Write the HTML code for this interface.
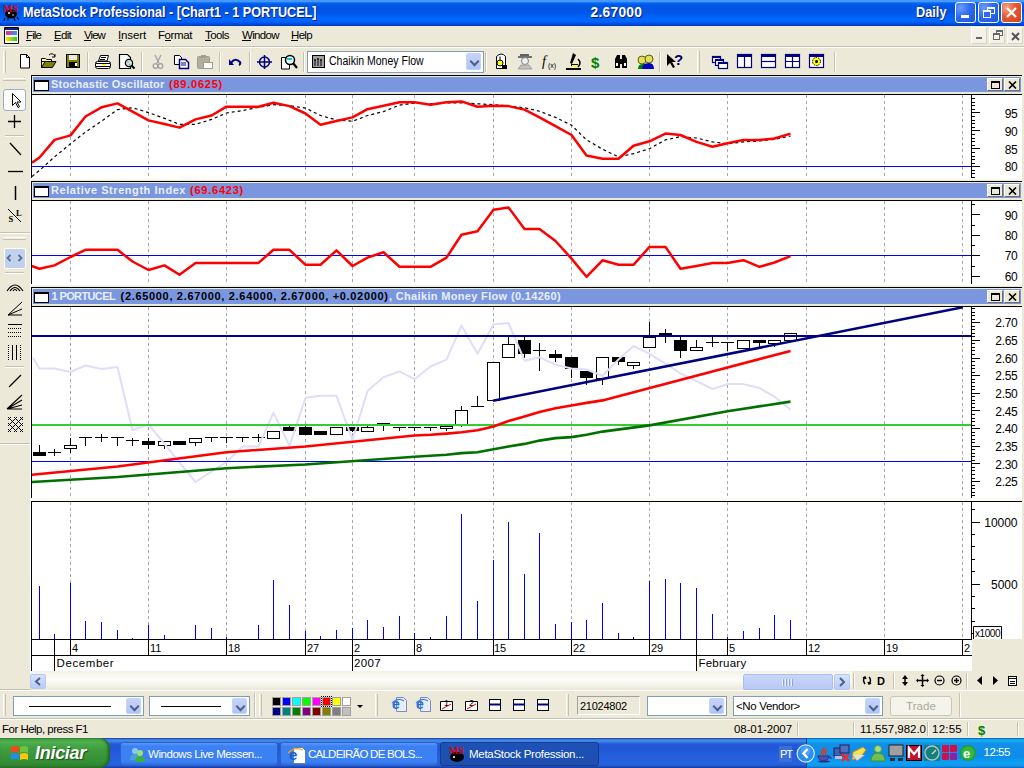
<!DOCTYPE html>
<html><head><meta charset="utf-8">
<style>
*{margin:0;padding:0;box-sizing:border-box}
html,body{width:1024px;height:768px;overflow:hidden;background:#ECE9D8;font-family:"Liberation Sans",sans-serif;font-size:11px;color:#000;position:relative}
.a{position:absolute}
.t{position:absolute;white-space:pre;line-height:1}
#title{left:0;top:0;width:1024px;height:26px;background:linear-gradient(180deg,#4898ff 0px,#4898ff 1.5px,#0a7cff 2.5px,#005ae8 4px,#0053e0 8px,#0058ea 13px,#0066ff 19px,#0064fc 22px,#0048d8 24px,#003cc8 26px)}
.tbtn{position:absolute;top:2px;width:21px;height:21px;border:1px solid #fff;border-radius:3px;background:radial-gradient(circle at 25% 25%,#6d9cff 0,#2e6bf0 45%,#1f54d8 100%)}
.mdib{position:absolute;top:27px;width:16px;height:17px;background:#f3f1e8;border:1px solid #fff;border-right-color:#d8d4c4;border-bottom-color:#d8d4c4}
.hdr{position:absolute;left:31px;width:993px;height:20px;background:#000}
.hdr .in{position:absolute;left:1px;top:1px;width:990px;height:18px;background:#ECE9D8}
.hdr .bl{position:absolute;left:2px;top:2px;width:988px;height:15px;background:#7A96DF}
.hdr .ic{position:absolute;left:1px;top:3px;width:15px;height:11px;background:#fff;border:1px solid #000;border-top-width:2px}
.hb{position:absolute;width:16px;height:13px;background:#ECE9D8;border:1px solid;border-color:#fff #716f64 #716f64 #fff}
.panel{position:absolute;left:31px;background:#fff;border-left:1px solid #000}
.sep{position:absolute;width:2px;border-left:1px solid #c5c2b2;border-right:1px solid #fff}
.grip{position:absolute;width:3px;border-left:1px solid #fff;border-right:1px solid #c5c2b2;background:#ECE9D8}
.combo{position:absolute;background:#fff;border:1px solid #7f9db9}
.dd{position:absolute;width:15px;height:17px;border-radius:2px;background:linear-gradient(180deg,#c6d3f7,#b0c4f5);border:1px solid #c3d3fd}
.dd:after{content:"";position:absolute;left:4px;top:4px;width:5px;height:5px;border-right:2px solid #4d6185;border-bottom:2px solid #4d6185;transform:rotate(45deg)}
#task{left:0;top:738px;width:1024px;height:30px;background:linear-gradient(180deg,#1f2f86 0,#3165c4 3%,#3682e5 6%,#4490e6 10%,#3883e5 12%,#2b71e0 15%,#2663da 18%,#235bd6 20%,#2258d5 23%,#2157d6 38%,#245ddb 54%,#2562df 86%,#245fdc 89%,#2158d4 92%,#1d4ec0 95%,#1941a5 98%)}
.tb{position:absolute;top:742px;height:24px;border-radius:3px;background:linear-gradient(180deg,#5a98fa 0,#3c81f3 15%,#3c81f3 85%,#2d6ae0 100%);border:1px solid #2c5fd0}
.tba{background:linear-gradient(180deg,#1e52b7 0,#1e4fb0 100%);border-color:#173b8a}
</style></head><body>
<!-- TITLE BAR -->
<div id="title" class="a"></div>
<div class="tbtn" style="left:955px"><div class="a" style="left:5px;top:12px;width:8px;height:3px;background:#fff"></div></div>
<div class="tbtn" style="left:978px"><div class="a" style="left:8px;top:4px;width:8px;height:7px;border:1px solid #fff;border-top-width:2px"></div><div class="a" style="left:4px;top:7px;width:8px;height:8px;border:1px solid #fff;border-top-width:2px;background:#3068ec"></div></div>
<div class="tbtn" style="left:1001px;background:radial-gradient(circle at 25% 25%,#f5a587 0,#e4592f 45%,#cc4219 100%)"><svg class="a" style="left:3px;top:3px" width="13" height="13"><path d="M2 2L11 11M11 2L2 11" stroke="#fff" stroke-width="2.2"/></svg></div>

<!-- MENU BAR -->
<div class="a" style="left:4px;top:27px;width:15px;height:17px;background:#000;border-radius:1px"></div>
<div class="a" style="left:5px;top:28px;width:13px;height:15px;background:#fff"></div><div class="a" style="left:5px;top:28px;width:13px;height:2px;background:#10208a"></div>
<div class="a" style="left:6px;top:31px;width:11px;height:4px;background:linear-gradient(90deg,#ff2080,#20a0ff)"></div>
<div class="a" style="left:6px;top:37px;width:11px;height:4px;background:linear-gradient(90deg,#ffe000,#20d020)"></div>
<div class="mdib" style="left:971px"><div class="a" style="left:4px;top:9px;width:6px;height:2px;background:#666"></div></div>
<div class="mdib" style="left:989px"><div class="a" style="left:6px;top:2px;width:7px;height:6px;border:1px solid #666;border-top-width:2px"></div><div class="a" style="left:3px;top:5px;width:7px;height:7px;border:1px solid #666;border-top-width:2px;background:#f3f1e8"></div></div>
<div class="mdib" style="left:1007px"><svg class="a" style="left:2px;top:3px" width="11" height="11"><path d="M2 2L9 9M9 2L2 9" stroke="#555" stroke-width="2"/></svg></div>
<div class="a" style="left:0;top:46px;width:1024px;height:1px;background:#c5c2b2"></div>
<div class="a" style="left:0;top:47px;width:1024px;height:1px;background:#fff"></div>

<!-- TOOLBAR -->
<div class="grip" style="left:3px;top:51px;height:22px"></div>
<div class="sep" style="left:87px;top:52px;height:20px"></div>
<div class="sep" style="left:141px;top:52px;height:20px"></div>
<div class="sep" style="left:219px;top:52px;height:20px"></div>
<div class="sep" style="left:249px;top:52px;height:20px"></div>
<div class="sep" style="left:303px;top:52px;height:20px"></div>
<div class="sep" style="left:485px;top:52px;height:20px"></div>
<div class="sep" style="left:659px;top:52px;height:20px"></div>
<div class="sep" style="left:834px;top:52px;height:20px"></div>
<div class="grip" style="left:697px;top:51px;height:22px"></div>
<div class="combo" style="left:307px;top:51px;width:177px;height:22px"></div>
<div class="dd" style="left:466px;top:53px"></div>
<svg class="a" style="left:0;top:47px" width="840" height="28">
<!-- new -->
<path d="M20.5 7.5h6l3 3v10.5h-9z" fill="#fff" stroke="#000"/><path d="M26.5 7.5v3h3" fill="none" stroke="#000"/>
<!-- open -->
<path d="M41.5 11.5h4l1 1h5v2h-10z" fill="#ffff80" stroke="#000"/><path d="M41.5 13v7.5h11l3.5-6h-11l-3.5 6" fill="#808000" stroke="#000"/><path d="M49 8q3-3 6 1" fill="none" stroke="#000"/><path d="M55 7v3h-3" fill="none" stroke="#000"/>
<!-- save -->
<rect x="66.5" y="7.5" width="13" height="13" fill="#808000" stroke="#000"/><rect x="69" y="8" width="8" height="5" fill="#ecead8"/><rect x="69" y="15" width="8" height="5" fill="#000"/><rect x="75" y="16" width="2" height="3" fill="#fff"/>
<!-- print -->
<path d="M100.5 8.5h8l-1.5 5.5h-8.5z" fill="#fff" stroke="#000"/><path d="M101 10.5h5M100 12.5h5" stroke="#000"/><rect x="95.5" y="14.5" width="15" height="7" rx="2" fill="#fff" stroke="#000"/><path d="M96 16.5h14M96 19.5h14" stroke="#000"/><rect x="97" y="17" width="12" height="2" fill="#fff"/><rect x="102" y="17" width="3" height="2" fill="#ffff00"/>
<!-- preview -->
<path d="M119.5 7.5h8l3 3v11h-11z" fill="#fff" stroke="#000" stroke-width="1.2"/><circle cx="129" cy="16" r="3.6" fill="#e8e0d0" stroke="#000" stroke-width="1.3"/><path d="M127.5 14.5l1 1M129 17l1 1" stroke="#00e0ff" stroke-width="1.5"/><path d="M131.5 18.5l3 3" stroke="#000" stroke-width="2"/>
<!-- cut gray -->
<path d="M155 8l4 8M161 8l-4 8" stroke="#a0a0a0" stroke-width="1.3" fill="none"/><circle cx="155.5" cy="19" r="2.3" fill="none" stroke="#a0a0a0" stroke-width="1.3"/><circle cx="160.5" cy="19" r="2.3" fill="none" stroke="#a0a0a0" stroke-width="1.3"/>
<!-- copy -->
<path d="M174.5 8.5h5l2 2v7h-7z" fill="#fff" stroke="#000"/><path d="M179.5 12.5h6l3 3v6h-9z" fill="#fff" stroke="#000080" stroke-width="1.5"/><path d="M181 16h5M181 18h5" stroke="#000080"/>
<!-- paste gray -->
<rect x="197.5" y="9.5" width="12" height="12" rx="1" fill="#b0ae9c" stroke="#a09e8c"/><rect x="201" y="8" width="5" height="3" fill="#a09e8c"/><rect x="203.5" y="15.5" width="9" height="6" fill="#fff" stroke="#a09e8c"/>
<!-- undo -->
<path d="M231 16q4-6 9 -1q1 2 -1 3" fill="none" stroke="#000080" stroke-width="2"/><path d="M229 12v6h5z" fill="#000080"/>
<!-- crosshair -->
<circle cx="264.5" cy="15" r="5" fill="none" stroke="#000080" stroke-width="1.5"/><path d="M264.5 8v14M257 15h15" stroke="#000080" stroke-width="1.5"/>
<!-- zoom -->
<path d="M281.5 10.5h6l2 2v9.5h-8z" fill="#fff" stroke="#000"/><circle cx="290" cy="13" r="4.5" fill="#e0ffff" stroke="#000" stroke-width="1.5"/><path d="M293 16l4 5" stroke="#000" stroke-width="2.2"/><rect x="287" y="11" width="5" height="2" fill="#20c0c0"/>
<!-- combo icon -->
<rect x="312.5" y="8.5" width="12" height="12" fill="#a0a0a0" stroke="#000"/><path d="M315 19v-7M318 19v-8M321 19v-7M314 13h2M317 12h2M320 13h2" stroke="#000"/>
<!-- lock -->
<path d="M496.5 9.5q5-5 9 0v12h-9z" fill="#fff" stroke="#000"/><circle cx="500" cy="16" r="3" fill="#ffff00" stroke="#000"/><path d="M500 9.5v4" stroke="#000"/><rect x="502" y="18" width="5" height="4" fill="#000"/>
<!-- chaplin gray -->
<rect x="520" y="7" width="9" height="3" fill="#606060"/><rect x="518" y="9" width="14" height="2" fill="#707070"/><circle cx="525" cy="14" r="3.5" fill="#f0f0f0" stroke="#808080"/><path d="M518 22l3-4h8l3 4z" fill="#c0c0c0" stroke="#a0a0a0"/>
<!-- f(x) -->
<text x="542" y="19" font-family="Liberation Serif" font-style="italic" font-size="14" fill="#000">f</text><text x="548" y="21" font-family="Liberation Sans" font-size="7" fill="#000">(x)</text>
<!-- microscope -->
<path d="M573 6l3 2-4 9-2-1z" fill="#000"/><path d="M571 18h7M566 22h15" stroke="#000" stroke-width="2"/><rect x="572" y="18" width="6" height="2" fill="#ffff00"/><path d="M578 12q4 4 0 8" fill="none" stroke="#000" stroke-width="1.5"/>
<!-- $ -->
<text x="591" y="21" font-family="Liberation Sans" font-weight="bold" font-size="15" fill="#008000">$</text>
<!-- binoculars -->
<path d="M615 12l2-4h3v4l2 0v-4h3l2 4v9h-5v-4h-2v4h-5z" fill="#000"/><rect x="616" y="16" width="2" height="3" fill="#fff"/><rect x="624" y="16" width="2" height="3" fill="#fff"/>
<!-- people -->
<circle cx="642" cy="13" r="4" fill="#e0e060" stroke="#606000"/><circle cx="649" cy="12" r="4" fill="#e0e060" stroke="#606000"/><path d="M638 22q0-5 5-5h2v5z" fill="#008000"/><path d="M642 22q0-6 7-6q5 0 5 6z" fill="#0000c0"/>
<!-- help arrow -->
<path d="M667 7v12l3-3 3 5 2-1-3-5h4z" fill="#000"/><text x="674" y="18" font-family="Liberation Sans" font-weight="bold" font-size="15" fill="#000080">?</text>
<!-- window icons -->
<g stroke="#000080" fill="#fff" stroke-width="1.2">
<rect x="712.5" y="9.5" width="8" height="6"/><rect x="715.5" y="12.5" width="8" height="6"/><rect x="718.5" y="15.5" width="9" height="6"/>
<rect x="737.5" y="7.5" width="14" height="13"/><path d="M744.5 9v11"/>
<rect x="761.5" y="7.5" width="14" height="13"/><path d="M762 14.5h13"/>
<rect x="785.5" y="7.5" width="14" height="13"/><path d="M786 14.5h13M792.5 9v11"/>
<rect x="809.5" y="7.5" width="14" height="13"/>
</g>
<g fill="#000080"><rect x="712" y="9" width="9" height="2"/><rect x="715" y="12" width="9" height="2"/><rect x="718" y="15" width="10" height="2"/><rect x="737" y="7" width="15" height="3"/><rect x="761" y="7" width="15" height="3"/><rect x="785" y="7" width="15" height="3"/><rect x="809" y="7" width="15" height="3"/></g>
<circle cx="816.5" cy="14.5" r="4" fill="#ffff00" stroke="#000" stroke-dasharray="1.5 1"/><circle cx="816.5" cy="14.5" r="1.5" fill="#000"/>
</svg>

<!-- LEFT STRIP -->
<div class="a" style="left:0;top:75px;width:30px;height:615px;background:#ECE9D8"></div>
<div class="a" style="left:30px;top:75px;width:1px;height:596px;background:#fff"></div>
<div class="a" style="left:3px;top:78px;width:23px;height:3px;border-top:1px solid #fff;border-bottom:1px solid #c5c2b2;background:#ECE9D8"></div>
<div class="a" style="left:3px;top:237px;width:23px;height:3px;border-top:1px solid #fff;border-bottom:1px solid #c5c2b2;background:#ECE9D8"></div>
<div class="a" style="left:5px;top:135px;width:19px;height:2px;border-top:1px solid #c5c2b2;border-bottom:1px solid #fff"></div>
<div class="a" style="left:5px;top:272px;width:19px;height:2px;border-top:1px solid #c5c2b2;border-bottom:1px solid #fff"></div>
<div class="a" style="left:5px;top:366px;width:19px;height:2px;border-top:1px solid #c5c2b2;border-bottom:1px solid #fff"></div>
<div class="a" style="left:0;top:232px;width:30px;height:2px;border-top:1px solid #c5c2b2;border-bottom:1px solid #fff"></div>
<div class="a" style="left:0;top:443px;width:30px;height:2px;border-top:1px solid #c5c2b2;border-bottom:1px solid #fff"></div>
<div class="a" style="left:3px;top:89px;width:23px;height:22px;border:1px solid #9cb0ce;border-radius:3px;background:#fcfcf9"></div>
<div class="a" style="left:4px;top:248px;width:22px;height:21px;border:1px solid #fff;border-radius:2px;background:#c1d2ee"></div>
<svg class="a" style="left:0;top:75px" width="30" height="370">
<path d="M12.5 18.5v12l3-3 2.5 5 1.5-.8-2.5-4.7h4z" fill="#fff" stroke="#000"/>
<path d="M8 46.5h13M14.5 40v13" stroke="#000" stroke-width="1.3"/>
<path d="M10 68l11 12" stroke="#000" stroke-width="1.3"/>
<path d="M8 96.5h15" stroke="#000" stroke-width="1.3"/>
<path d="M15.5 111v14" stroke="#000" stroke-width="1.5"/>
<path d="M8 134l13 13" stroke="#000" stroke-width="1"/><text x="8.5" y="146.5" font-size="8.5" font-weight="bold" font-family="Liberation Serif">S</text><text x="16" y="140.5" font-size="8.5" font-weight="bold" font-family="Liberation Serif">L</text>
<path d="M10.5 180l-3 3 3 3M18.5 180l3 3-3 3" fill="none" stroke="#5a6e96" stroke-width="1.8"/>
<path d="M7 216q8-12 16 0M10 216q5-7 10 0M13 216q2-3 4 0" fill="none" stroke="#000" stroke-width="1.2"/>
<path d="M8 240l14-13M8 240l14-6M8 240l14 0" fill="none" stroke="#000" stroke-width="1"/>
<path d="M8 249.5h14M8 253.5h14M8 257.5h14M8 261.5h14" stroke="#000" stroke-dasharray="1 1"/><path d="M8 249.5h14" stroke="#000"/>
<path d="M8.5 270v15M12.5 270v15M16.5 270v15M20.5 270v15" stroke="#000" stroke-dasharray="1 1"/><path d="M12.5 270v15M16.5 270v15" stroke="#000" stroke-width="1"/>
<path d="M9 312l12-12" stroke="#000" stroke-width="1.2"/>
<path d="M7 334l15-14M7 334l15-9M7 334l15-4M7 334h15" stroke="#000" stroke-width="1.1"/><path d="M7 334l4-4v4z" fill="#000"/>
<path d="M8 342h1v1h-1zM8 344h1v1h-1zM8 348h1v1h-1zM8 350h1v1h-1zM8 354h1v1h-1zM8 356h1v1h-1zM9 343h1v1h-1zM9 349h1v1h-1zM9 355h1v1h-1zM10 342h1v1h-1zM10 344h1v1h-1zM10 348h1v1h-1zM10 350h1v1h-1zM10 354h1v1h-1zM10 356h1v1h-1zM11 345h1v1h-1zM11 347h1v1h-1zM11 351h1v1h-1zM11 353h1v1h-1zM12 346h1v1h-1zM12 352h1v1h-1zM13 345h1v1h-1zM13 347h1v1h-1zM13 351h1v1h-1zM13 353h1v1h-1zM14 342h1v1h-1zM14 344h1v1h-1zM14 348h1v1h-1zM14 350h1v1h-1zM14 354h1v1h-1zM14 356h1v1h-1zM15 343h1v1h-1zM15 349h1v1h-1zM15 355h1v1h-1zM16 342h1v1h-1zM16 344h1v1h-1zM16 348h1v1h-1zM16 350h1v1h-1zM16 354h1v1h-1zM16 356h1v1h-1zM17 345h1v1h-1zM17 347h1v1h-1zM17 351h1v1h-1zM17 353h1v1h-1zM18 346h1v1h-1zM18 352h1v1h-1zM19 345h1v1h-1zM19 347h1v1h-1zM19 351h1v1h-1zM19 353h1v1h-1zM20 342h1v1h-1zM20 344h1v1h-1zM20 348h1v1h-1zM20 350h1v1h-1zM20 354h1v1h-1zM20 356h1v1h-1zM21 343h1v1h-1zM21 349h1v1h-1zM21 355h1v1h-1zM22 342h1v1h-1zM22 344h1v1h-1zM22 348h1v1h-1zM22 350h1v1h-1zM22 354h1v1h-1zM22 356h1v1h-1z" fill="#000"/>
</svg>

<!-- CHART PANELS -->
<div class="hdr" style="top:75px"><div class="in"></div><div class="bl"><div class="ic"></div><div class="hb" style="left:954px;top:1px"><div class="a" style="left:3px;top:2px;width:9px;height:8px;border:1px solid #000;border-top-width:2px"></div></div><div class="hb" style="left:971px;top:1px"><svg class="a" style="left:3px;top:2px" width="9" height="8"><path d="M1 0.5L8 7.5M8 0.5L1 7.5" stroke="#000" stroke-width="1.6"/></svg></div></div></div>
<div class="panel" style="top:95px;height:83px;width:991px"></div>
<div class="a" style="left:31px;top:178px;width:993px;height:2px;background:#fbfaf5"></div>
<div class="hdr" style="top:181px"><div class="in"></div><div class="bl"><div class="ic"></div><div class="hb" style="left:954px;top:1px"><div class="a" style="left:3px;top:2px;width:9px;height:8px;border:1px solid #000;border-top-width:2px"></div></div><div class="hb" style="left:971px;top:1px"><svg class="a" style="left:3px;top:2px" width="9" height="8"><path d="M1 0.5L8 7.5M8 0.5L1 7.5" stroke="#000" stroke-width="1.6"/></svg></div></div></div>
<div class="panel" style="top:201px;height:83px;width:991px"></div>
<div class="a" style="left:31px;top:284px;width:993px;height:2px;background:#fbfaf5"></div>
<div class="hdr" style="top:287px"><div class="in"></div><div class="bl"><div class="ic"></div><div class="hb" style="left:954px;top:1px"><div class="a" style="left:3px;top:2px;width:9px;height:8px;border:1px solid #000;border-top-width:2px"></div></div><div class="hb" style="left:971px;top:1px"><svg class="a" style="left:3px;top:2px" width="9" height="8"><path d="M1 0.5L8 7.5M8 0.5L1 7.5" stroke="#000" stroke-width="1.6"/></svg></div></div></div>
<div class="panel" style="top:307px;height:191px;width:991px"></div>
<div class="a" style="left:31px;top:498px;width:993px;height:3px;background:#fbfaf5"></div>
<div class="a" style="left:31px;top:501px;width:993px;height:1px;background:#000"></div>
<div class="panel" style="top:502px;height:137px;width:991px"></div>
<div class="panel" style="top:639px;height:32px;width:941px"></div>
<div class="a" style="left:1022px;top:75px;width:2px;height:596px;background:#ECE9D8"></div>
<svg class="a" style="left:0;top:0" width="1024" height="768">
<defs><clipPath id="cs"><rect x="32" y="95" width="940" height="83"/></clipPath><clipPath id="cr"><rect x="32" y="201" width="940" height="83"/></clipPath><clipPath id="cp"><rect x="32" y="307" width="940" height="191"/></clipPath></defs>
<line x1="70.5" y1="95" x2="70.5" y2="178" stroke="#a8a8a8" stroke-width="1" stroke-dasharray="3 3"/>
<line x1="148.5" y1="95" x2="148.5" y2="178" stroke="#a8a8a8" stroke-width="1" stroke-dasharray="3 3"/>
<line x1="226.5" y1="95" x2="226.5" y2="178" stroke="#a8a8a8" stroke-width="1" stroke-dasharray="3 3"/>
<line x1="305.5" y1="95" x2="305.5" y2="178" stroke="#a8a8a8" stroke-width="1" stroke-dasharray="3 3"/>
<line x1="352.5" y1="95" x2="352.5" y2="178" stroke="#a8a8a8" stroke-width="1" stroke-dasharray="3 3"/>
<line x1="414.5" y1="95" x2="414.5" y2="178" stroke="#a8a8a8" stroke-width="1" stroke-dasharray="3 3"/>
<line x1="493.5" y1="95" x2="493.5" y2="178" stroke="#a8a8a8" stroke-width="1" stroke-dasharray="3 3"/>
<line x1="571.5" y1="95" x2="571.5" y2="178" stroke="#a8a8a8" stroke-width="1" stroke-dasharray="3 3"/>
<line x1="649.5" y1="95" x2="649.5" y2="178" stroke="#a8a8a8" stroke-width="1" stroke-dasharray="3 3"/>
<line x1="727.5" y1="95" x2="727.5" y2="178" stroke="#a8a8a8" stroke-width="1" stroke-dasharray="3 3"/>
<line x1="806.5" y1="95" x2="806.5" y2="178" stroke="#a8a8a8" stroke-width="1" stroke-dasharray="3 3"/>
<line x1="884.5" y1="95" x2="884.5" y2="178" stroke="#a8a8a8" stroke-width="1" stroke-dasharray="3 3"/>
<line x1="962.5" y1="95" x2="962.5" y2="178" stroke="#a8a8a8" stroke-width="1" stroke-dasharray="3 3"/>
<line x1="70.5" y1="201" x2="70.5" y2="284" stroke="#a8a8a8" stroke-width="1" stroke-dasharray="3 3"/>
<line x1="148.5" y1="201" x2="148.5" y2="284" stroke="#a8a8a8" stroke-width="1" stroke-dasharray="3 3"/>
<line x1="226.5" y1="201" x2="226.5" y2="284" stroke="#a8a8a8" stroke-width="1" stroke-dasharray="3 3"/>
<line x1="305.5" y1="201" x2="305.5" y2="284" stroke="#a8a8a8" stroke-width="1" stroke-dasharray="3 3"/>
<line x1="352.5" y1="201" x2="352.5" y2="284" stroke="#a8a8a8" stroke-width="1" stroke-dasharray="3 3"/>
<line x1="414.5" y1="201" x2="414.5" y2="284" stroke="#a8a8a8" stroke-width="1" stroke-dasharray="3 3"/>
<line x1="493.5" y1="201" x2="493.5" y2="284" stroke="#a8a8a8" stroke-width="1" stroke-dasharray="3 3"/>
<line x1="571.5" y1="201" x2="571.5" y2="284" stroke="#a8a8a8" stroke-width="1" stroke-dasharray="3 3"/>
<line x1="649.5" y1="201" x2="649.5" y2="284" stroke="#a8a8a8" stroke-width="1" stroke-dasharray="3 3"/>
<line x1="727.5" y1="201" x2="727.5" y2="284" stroke="#a8a8a8" stroke-width="1" stroke-dasharray="3 3"/>
<line x1="806.5" y1="201" x2="806.5" y2="284" stroke="#a8a8a8" stroke-width="1" stroke-dasharray="3 3"/>
<line x1="884.5" y1="201" x2="884.5" y2="284" stroke="#a8a8a8" stroke-width="1" stroke-dasharray="3 3"/>
<line x1="962.5" y1="201" x2="962.5" y2="284" stroke="#a8a8a8" stroke-width="1" stroke-dasharray="3 3"/>
<line x1="70.5" y1="307" x2="70.5" y2="498" stroke="#a8a8a8" stroke-width="1" stroke-dasharray="3 3"/>
<line x1="148.5" y1="307" x2="148.5" y2="498" stroke="#a8a8a8" stroke-width="1" stroke-dasharray="3 3"/>
<line x1="226.5" y1="307" x2="226.5" y2="498" stroke="#a8a8a8" stroke-width="1" stroke-dasharray="3 3"/>
<line x1="305.5" y1="307" x2="305.5" y2="498" stroke="#a8a8a8" stroke-width="1" stroke-dasharray="3 3"/>
<line x1="352.5" y1="307" x2="352.5" y2="498" stroke="#a8a8a8" stroke-width="1" stroke-dasharray="3 3"/>
<line x1="414.5" y1="307" x2="414.5" y2="498" stroke="#a8a8a8" stroke-width="1" stroke-dasharray="3 3"/>
<line x1="493.5" y1="307" x2="493.5" y2="498" stroke="#a8a8a8" stroke-width="1" stroke-dasharray="3 3"/>
<line x1="571.5" y1="307" x2="571.5" y2="498" stroke="#a8a8a8" stroke-width="1" stroke-dasharray="3 3"/>
<line x1="649.5" y1="307" x2="649.5" y2="498" stroke="#a8a8a8" stroke-width="1" stroke-dasharray="3 3"/>
<line x1="727.5" y1="307" x2="727.5" y2="498" stroke="#a8a8a8" stroke-width="1" stroke-dasharray="3 3"/>
<line x1="806.5" y1="307" x2="806.5" y2="498" stroke="#a8a8a8" stroke-width="1" stroke-dasharray="3 3"/>
<line x1="884.5" y1="307" x2="884.5" y2="498" stroke="#a8a8a8" stroke-width="1" stroke-dasharray="3 3"/>
<line x1="962.5" y1="307" x2="962.5" y2="498" stroke="#a8a8a8" stroke-width="1" stroke-dasharray="3 3"/>
<line x1="70.5" y1="502" x2="70.5" y2="639" stroke="#a8a8a8" stroke-width="1" stroke-dasharray="3 3"/>
<line x1="148.5" y1="502" x2="148.5" y2="639" stroke="#a8a8a8" stroke-width="1" stroke-dasharray="3 3"/>
<line x1="226.5" y1="502" x2="226.5" y2="639" stroke="#a8a8a8" stroke-width="1" stroke-dasharray="3 3"/>
<line x1="305.5" y1="502" x2="305.5" y2="639" stroke="#a8a8a8" stroke-width="1" stroke-dasharray="3 3"/>
<line x1="352.5" y1="502" x2="352.5" y2="639" stroke="#a8a8a8" stroke-width="1" stroke-dasharray="3 3"/>
<line x1="414.5" y1="502" x2="414.5" y2="639" stroke="#a8a8a8" stroke-width="1" stroke-dasharray="3 3"/>
<line x1="493.5" y1="502" x2="493.5" y2="639" stroke="#a8a8a8" stroke-width="1" stroke-dasharray="3 3"/>
<line x1="571.5" y1="502" x2="571.5" y2="639" stroke="#a8a8a8" stroke-width="1" stroke-dasharray="3 3"/>
<line x1="649.5" y1="502" x2="649.5" y2="639" stroke="#a8a8a8" stroke-width="1" stroke-dasharray="3 3"/>
<line x1="727.5" y1="502" x2="727.5" y2="639" stroke="#a8a8a8" stroke-width="1" stroke-dasharray="3 3"/>
<line x1="806.5" y1="502" x2="806.5" y2="639" stroke="#a8a8a8" stroke-width="1" stroke-dasharray="3 3"/>
<line x1="884.5" y1="502" x2="884.5" y2="639" stroke="#a8a8a8" stroke-width="1" stroke-dasharray="3 3"/>
<line x1="962.5" y1="502" x2="962.5" y2="639" stroke="#a8a8a8" stroke-width="1" stroke-dasharray="3 3"/>
<g clip-path="url(#cs)">
<line x1="32" y1="166.5" x2="972" y2="166.5" stroke="#0000ff" stroke-width="1"/>
<polyline points="32.0,176.5 39.5,170.4 54.5,156.9 70.5,143.8 85.5,132.0 101.5,121.3 117.5,109.6 132.5,107.7 148.5,112.6 164.5,118.4 179.5,124.3 195.5,124.3 211.5,119.4 226.5,113.0 242.5,110.6 258.5,107.3 273.5,104.7 289.5,105.7 305.5,108.1 320.5,115.5 336.5,120.0 352.5,121.3 367.5,115.5 383.5,111.6 399.5,105.1 414.5,103.1 430.5,103.8 446.5,102.8 461.5,102.8 477.5,103.8 493.5,104.7 508.5,106.1 524.5,107.7 539.5,111.2 555.5,117.4 571.5,125.2 586.5,139.9 602.5,149.2 618.5,156.9 633.5,153.6 649.5,148.7 665.5,139.9 680.5,136.6 696.5,138.0 712.5,141.9 727.5,143.8 743.5,141.9 759.5,140.9 774.5,139.3 790.5,136.0" fill="none" stroke="#000" stroke-width="1.2" stroke-dasharray="3 3"/>
<polyline points="32.0,162.8 39.5,157.5 54.5,139.9 70.5,135.4 85.5,116.5 101.5,107.3 117.5,103.4 132.5,111.6 148.5,120.4 164.5,124.0 179.5,127.6 195.5,119.4 211.5,115.5 226.5,106.7 242.5,106.7 258.5,106.7 273.5,102.8 289.5,106.1 305.5,113.5 320.5,124.7 336.5,121.0 352.5,117.4 367.5,109.2 383.5,105.7 399.5,102.2 414.5,102.2 430.5,104.7 446.5,102.2 461.5,101.4 477.5,106.7 493.5,105.7 508.5,106.1 524.5,109.6 539.5,117.4 555.5,126.2 571.5,135.0 586.5,155.5 602.5,158.8 618.5,158.8 633.5,145.8 649.5,141.3 665.5,133.6 680.5,135.0 696.5,141.9 712.5,146.7 727.5,143.2 743.5,139.9 759.5,139.9 774.5,138.5 790.5,133.6" fill="none" stroke="#ff0000" stroke-width="2.5" stroke-linejoin="round"/>
</g>
<g clip-path="url(#cr)">
<line x1="32" y1="255.5" x2="972" y2="255.5" stroke="#0000ff" stroke-width="1"/>
<polyline points="31.6,266.0 39.5,268.8 54.5,265.4 70.5,257.0 85.5,249.8 101.5,249.8 117.5,249.8 132.5,261.5 148.5,270.0 164.5,265.4 179.5,274.8 195.5,262.9 211.5,262.9 226.5,262.9 242.5,262.9 258.5,262.9 273.5,249.8 289.5,249.8 305.5,264.8 320.5,264.8 336.5,250.4 352.5,266.0 367.5,257.6 383.5,252.3 399.5,266.8 414.5,266.8 430.5,266.8 446.5,257.6 461.5,234.8 477.5,231.2 493.5,209.8 508.5,207.4 524.5,228.9 539.5,228.9 555.5,241.0 571.5,258.6 586.5,276.8 602.5,260.3 618.5,264.8 633.5,264.8 649.5,246.9 665.5,246.9 680.5,268.8 696.5,266.0 712.5,262.9 727.5,262.9 743.5,260.2 759.5,266.8 774.5,262.5 790.5,256.2" fill="none" stroke="#ff0000" stroke-width="2.5" stroke-linejoin="round"/>
</g>
<g clip-path="url(#cp)">
<line x1="39.5" y1="445" x2="39.5" y2="456" stroke="#000" stroke-width="1"/>
<rect x="33.5" y="452.5" width="12" height="3.0" fill="#000" stroke="#000" stroke-width="1"/>
<line x1="54.5" y1="449" x2="54.5" y2="456" stroke="#000" stroke-width="1"/>
<line x1="48.0" y1="452.5" x2="61.0" y2="452.5" stroke="#000" stroke-width="1"/>
<line x1="70.5" y1="438" x2="70.5" y2="453" stroke="#000" stroke-width="1"/>
<rect x="64.5" y="445.5" width="12" height="3.0" fill="#fff" stroke="#000" stroke-width="1"/>
<line x1="85.5" y1="437" x2="85.5" y2="446" stroke="#000" stroke-width="1"/>
<line x1="79.0" y1="437.5" x2="92.0" y2="437.5" stroke="#000" stroke-width="1"/>
<line x1="101.5" y1="434" x2="101.5" y2="442" stroke="#000" stroke-width="1"/>
<line x1="95.0" y1="437.5" x2="108.0" y2="437.5" stroke="#000" stroke-width="1"/>
<line x1="117.5" y1="437" x2="117.5" y2="446" stroke="#000" stroke-width="1"/>
<line x1="111.0" y1="437.5" x2="124.0" y2="437.5" stroke="#000" stroke-width="1"/>
<line x1="132.5" y1="438" x2="132.5" y2="446" stroke="#000" stroke-width="1"/>
<line x1="126.0" y1="440.5" x2="139.0" y2="440.5" stroke="#000" stroke-width="1"/>
<line x1="148.5" y1="438" x2="148.5" y2="449" stroke="#000" stroke-width="1"/>
<rect x="142.5" y="441.5" width="12" height="3.0" fill="#000" stroke="#000" stroke-width="1"/>
<line x1="164.5" y1="441" x2="164.5" y2="449" stroke="#000" stroke-width="1"/>
<rect x="158.5" y="441.5" width="12" height="4.0" fill="#fff" stroke="#000" stroke-width="1"/>
<line x1="179.5" y1="441" x2="179.5" y2="445" stroke="#000" stroke-width="1"/>
<rect x="173.5" y="441.5" width="12" height="3.0" fill="#000" stroke="#000" stroke-width="1"/>
<line x1="195.5" y1="438" x2="195.5" y2="446" stroke="#000" stroke-width="1"/>
<rect x="189.5" y="438.5" width="12" height="4.0" fill="#fff" stroke="#000" stroke-width="1"/>
<line x1="211.5" y1="437" x2="211.5" y2="442" stroke="#000" stroke-width="1"/>
<line x1="205.0" y1="437.5" x2="218.0" y2="437.5" stroke="#000" stroke-width="1"/>
<line x1="226.5" y1="437" x2="226.5" y2="443" stroke="#000" stroke-width="1"/>
<line x1="220.0" y1="437.5" x2="233.0" y2="437.5" stroke="#000" stroke-width="1"/>
<line x1="242.5" y1="437" x2="242.5" y2="442" stroke="#000" stroke-width="1"/>
<line x1="236.0" y1="437.5" x2="249.0" y2="437.5" stroke="#000" stroke-width="1"/>
<line x1="258.5" y1="434" x2="258.5" y2="442" stroke="#000" stroke-width="1"/>
<line x1="252.0" y1="437.5" x2="265.0" y2="437.5" stroke="#000" stroke-width="1"/>
<line x1="273.5" y1="431" x2="273.5" y2="439" stroke="#000" stroke-width="1"/>
<rect x="267.5" y="431.5" width="12" height="7.0" fill="#fff" stroke="#000" stroke-width="1"/>
<line x1="289.5" y1="426" x2="289.5" y2="431" stroke="#000" stroke-width="1"/>
<rect x="283.5" y="427.5" width="12" height="3.0" fill="#000" stroke="#000" stroke-width="1"/>
<line x1="305.5" y1="426" x2="305.5" y2="435" stroke="#000" stroke-width="1"/>
<rect x="299.5" y="427.5" width="12" height="7.0" fill="#000" stroke="#000" stroke-width="1"/>
<line x1="320.5" y1="431" x2="320.5" y2="435" stroke="#000" stroke-width="1"/>
<rect x="314.5" y="431.5" width="12" height="3.0" fill="#000" stroke="#000" stroke-width="1"/>
<line x1="336.5" y1="427" x2="336.5" y2="435" stroke="#000" stroke-width="1"/>
<rect x="330.5" y="427.5" width="12" height="7.0" fill="#fff" stroke="#000" stroke-width="1"/>
<line x1="352.5" y1="427" x2="352.5" y2="432" stroke="#000" stroke-width="1"/>
<rect x="346.5" y="427.5" width="12" height="3.0" fill="#000" stroke="#000" stroke-width="1"/>
<line x1="367.5" y1="425" x2="367.5" y2="432" stroke="#000" stroke-width="1"/>
<rect x="361.5" y="427.5" width="12" height="4.0" fill="#fff" stroke="#000" stroke-width="1"/>
<line x1="383.5" y1="423" x2="383.5" y2="431" stroke="#000" stroke-width="1"/>
<line x1="377.0" y1="423.5" x2="390.0" y2="423.5" stroke="#000" stroke-width="1"/>
<line x1="399.5" y1="427" x2="399.5" y2="431" stroke="#000" stroke-width="1"/>
<line x1="393.0" y1="427.5" x2="406.0" y2="427.5" stroke="#000" stroke-width="1"/>
<line x1="414.5" y1="427" x2="414.5" y2="431" stroke="#000" stroke-width="1"/>
<line x1="408.0" y1="427.5" x2="421.0" y2="427.5" stroke="#000" stroke-width="1"/>
<line x1="430.5" y1="427" x2="430.5" y2="431" stroke="#000" stroke-width="1"/>
<line x1="424.0" y1="427.5" x2="437.0" y2="427.5" stroke="#000" stroke-width="1"/>
<line x1="446.5" y1="426" x2="446.5" y2="431" stroke="#000" stroke-width="1"/>
<rect x="440.5" y="426.5" width="12" height="2.0" fill="#fff" stroke="#000" stroke-width="1"/>
<line x1="461.5" y1="406" x2="461.5" y2="427" stroke="#000" stroke-width="1"/>
<rect x="455.5" y="410.5" width="12" height="14.0" fill="#fff" stroke="#000" stroke-width="1"/>
<line x1="477.5" y1="396" x2="477.5" y2="407" stroke="#000" stroke-width="1"/>
<line x1="471.0" y1="406.5" x2="484.0" y2="406.5" stroke="#000" stroke-width="1"/>
<line x1="493.5" y1="362" x2="493.5" y2="401" stroke="#000" stroke-width="1"/>
<rect x="487.5" y="362.5" width="12" height="38.0" fill="#fff" stroke="#000" stroke-width="1"/>
<line x1="508.5" y1="336" x2="508.5" y2="358" stroke="#000" stroke-width="1"/>
<rect x="502.5" y="344.5" width="12" height="13.0" fill="#fff" stroke="#000" stroke-width="1"/>
<line x1="524.5" y1="336" x2="524.5" y2="358" stroke="#000" stroke-width="1"/>
<rect x="518.5" y="340.5" width="12" height="13.0" fill="#000" stroke="#000" stroke-width="1"/>
<line x1="539.5" y1="343" x2="539.5" y2="371" stroke="#000" stroke-width="1"/>
<line x1="533.0" y1="350.5" x2="546.0" y2="350.5" stroke="#000" stroke-width="1"/>
<line x1="555.5" y1="350" x2="555.5" y2="362" stroke="#000" stroke-width="1"/>
<rect x="549.5" y="354.5" width="12" height="3.0" fill="#000" stroke="#000" stroke-width="1"/>
<line x1="571.5" y1="357" x2="571.5" y2="378" stroke="#000" stroke-width="1"/>
<rect x="565.5" y="357.5" width="12" height="11.0" fill="#000" stroke="#000" stroke-width="1"/>
<line x1="586.5" y1="371" x2="586.5" y2="385" stroke="#000" stroke-width="1"/>
<rect x="580.5" y="371.5" width="12" height="6.0" fill="#000" stroke="#000" stroke-width="1"/>
<line x1="602.5" y1="357" x2="602.5" y2="385" stroke="#000" stroke-width="1"/>
<rect x="596.5" y="357.5" width="12" height="21.0" fill="#fff" stroke="#000" stroke-width="1"/>
<line x1="618.5" y1="357" x2="618.5" y2="365" stroke="#000" stroke-width="1"/>
<rect x="612.5" y="357.5" width="12" height="4.0" fill="#000" stroke="#000" stroke-width="1"/>
<line x1="633.5" y1="362" x2="633.5" y2="369" stroke="#000" stroke-width="1"/>
<rect x="627.5" y="362.5" width="12" height="3.0" fill="#fff" stroke="#000" stroke-width="1"/>
<line x1="649.5" y1="322" x2="649.5" y2="348" stroke="#000" stroke-width="1"/>
<rect x="643.5" y="337.5" width="12" height="10.0" fill="#fff" stroke="#000" stroke-width="1"/>
<line x1="665.5" y1="329" x2="665.5" y2="343" stroke="#000" stroke-width="1"/>
<rect x="659.5" y="333.5" width="12" height="2.0" fill="#000" stroke="#000" stroke-width="1"/>
<line x1="680.5" y1="336" x2="680.5" y2="358" stroke="#000" stroke-width="1"/>
<rect x="674.5" y="340.5" width="12" height="10.0" fill="#000" stroke="#000" stroke-width="1"/>
<line x1="696.5" y1="340" x2="696.5" y2="351" stroke="#000" stroke-width="1"/>
<rect x="690.5" y="347.5" width="12" height="3.0" fill="#fff" stroke="#000" stroke-width="1"/>
<line x1="712.5" y1="336" x2="712.5" y2="347" stroke="#000" stroke-width="1"/>
<line x1="706.0" y1="342.5" x2="719.0" y2="342.5" stroke="#000" stroke-width="1"/>
<line x1="727.5" y1="342" x2="727.5" y2="351" stroke="#000" stroke-width="1"/>
<line x1="721.0" y1="342.5" x2="734.0" y2="342.5" stroke="#000" stroke-width="1"/>
<line x1="743.5" y1="340" x2="743.5" y2="349" stroke="#000" stroke-width="1"/>
<rect x="737.5" y="340.5" width="12" height="8.0" fill="#fff" stroke="#000" stroke-width="1"/>
<line x1="759.5" y1="340" x2="759.5" y2="347" stroke="#000" stroke-width="1"/>
<rect x="753.5" y="340.5" width="12" height="2.0" fill="#000" stroke="#000" stroke-width="1"/>
<line x1="774.5" y1="340" x2="774.5" y2="347" stroke="#000" stroke-width="1"/>
<rect x="768.5" y="340.5" width="12" height="3.0" fill="#fff" stroke="#000" stroke-width="1"/>
<line x1="790.5" y1="333" x2="790.5" y2="341" stroke="#000" stroke-width="1"/>
<rect x="784.5" y="333.5" width="12" height="7.0" fill="#fff" stroke="#000" stroke-width="1"/>
<polyline points="32.9,357.7 39.5,368.5 54.5,368.5 70.5,372.0 85.5,365.5 101.5,369.0 117.5,367.1 132.5,430.3 148.5,424.4 164.5,444.0 179.5,462.5 195.5,482.0 211.5,471.5 226.5,462.0 242.5,446.5 258.5,446.5 273.5,412.7 289.5,445.9 305.5,397.8 320.5,395.8 336.5,395.8 352.5,440.0 367.5,391.0 383.5,377.3 399.5,371.4 414.5,379.2 430.5,366.5 446.5,359.7 461.5,325.5 477.5,353.8 493.5,324.5 508.5,323.0 524.5,360.7 539.5,357.3 555.5,364.6 571.5,368.5 586.5,369.5 602.5,375.7 618.5,359.5 633.5,346.0 649.5,353.8 665.5,363.6 680.5,373.4 696.5,381.2 712.5,389.0 727.5,384.1 743.5,384.1 759.5,388.0 774.5,396.8 790.5,409.8" fill="none" stroke="#dedef8" stroke-width="2" stroke-linejoin="round"/>
<line x1="32" y1="336" x2="972" y2="336" stroke="#000080" stroke-width="2"/>
<line x1="32" y1="425" x2="972" y2="425" stroke="#33cc33" stroke-width="2"/>
<line x1="32" y1="461.5" x2="972" y2="461.5" stroke="#0000ff" stroke-width="1"/>
<polyline points="32.0,482.0 117.5,477.0 226.5,468.2 305.5,464.5 414.5,456.8 430.5,455.7 446.5,454.7 461.5,453.1 477.5,452.3 493.5,449.2 508.5,446.5 524.5,443.9 539.5,440.6 555.5,438.1 571.5,437.1 586.5,434.8 602.5,431.6 649.5,425.4 727.5,411.3 790.5,401.6" fill="none" stroke="#007000" stroke-width="2.6"/>
<polyline points="32.0,474.8 117.5,466.5 226.5,452.2 305.5,446.5 414.5,435.5 430.5,434.8 446.5,433.6 461.5,432.2 477.5,430.3 493.5,426.4 508.5,421.1 524.5,416.6 539.5,412.1 555.5,408.2 571.5,405.5 586.5,402.9 602.5,400.4 790.5,350.9" fill="none" stroke="#ff0000" stroke-width="2.6"/>
<line x1="493" y1="400.7" x2="962.8" y2="307.3" stroke="#000080" stroke-width="2.6"/>
</g>
<rect x="39" y="586" width="1" height="53" fill="#0000ff"/>
<rect x="54" y="634" width="1" height="5" fill="#0000ff"/>
<rect x="70" y="583" width="1" height="56" fill="#0000ff"/>
<rect x="85" y="621" width="1" height="18" fill="#0000ff"/>
<rect x="101" y="622" width="1" height="17" fill="#0000ff"/>
<rect x="117" y="630" width="1" height="9" fill="#0000ff"/>
<rect x="132" y="638" width="1" height="1" fill="#0000ff"/>
<rect x="148" y="625" width="1" height="14" fill="#0000ff"/>
<rect x="164" y="635" width="1" height="4" fill="#0000ff"/>
<rect x="195" y="625" width="1" height="14" fill="#0000ff"/>
<rect x="211" y="628" width="1" height="11" fill="#0000ff"/>
<rect x="226" y="637" width="1" height="2" fill="#0000ff"/>
<rect x="258" y="625" width="1" height="14" fill="#0000ff"/>
<rect x="273" y="580" width="1" height="59" fill="#0000ff"/>
<rect x="289" y="605" width="1" height="34" fill="#0000ff"/>
<rect x="305" y="631" width="1" height="8" fill="#0000ff"/>
<rect x="320" y="636" width="1" height="3" fill="#0000ff"/>
<rect x="336" y="630" width="1" height="9" fill="#0000ff"/>
<rect x="352" y="628" width="1" height="11" fill="#0000ff"/>
<rect x="367" y="620" width="1" height="19" fill="#0000ff"/>
<rect x="383" y="627" width="1" height="12" fill="#0000ff"/>
<rect x="399" y="616" width="1" height="23" fill="#0000ff"/>
<rect x="414" y="633" width="1" height="6" fill="#0000ff"/>
<rect x="430" y="637" width="1" height="2" fill="#0000ff"/>
<rect x="446" y="616" width="1" height="23" fill="#0000ff"/>
<rect x="461" y="514" width="1" height="125" fill="#0000ff"/>
<rect x="477" y="601" width="1" height="38" fill="#0000ff"/>
<rect x="493" y="560" width="1" height="79" fill="#0000ff"/>
<rect x="508" y="522" width="1" height="117" fill="#0000ff"/>
<rect x="524" y="574" width="1" height="65" fill="#0000ff"/>
<rect x="539" y="533" width="1" height="106" fill="#0000ff"/>
<rect x="555" y="624" width="1" height="15" fill="#0000ff"/>
<rect x="571" y="622" width="1" height="17" fill="#0000ff"/>
<rect x="586" y="620" width="1" height="19" fill="#0000ff"/>
<rect x="602" y="603" width="1" height="36" fill="#0000ff"/>
<rect x="618" y="633" width="1" height="6" fill="#0000ff"/>
<rect x="633" y="637" width="1" height="2" fill="#0000ff"/>
<rect x="649" y="581" width="1" height="58" fill="#0000ff"/>
<rect x="665" y="579" width="1" height="60" fill="#0000ff"/>
<rect x="680" y="583" width="1" height="56" fill="#0000ff"/>
<rect x="696" y="588" width="1" height="51" fill="#0000ff"/>
<rect x="712" y="614" width="1" height="25" fill="#0000ff"/>
<rect x="727" y="637" width="1" height="2" fill="#0000ff"/>
<rect x="743" y="631" width="1" height="8" fill="#0000ff"/>
<rect x="759" y="628" width="1" height="11" fill="#0000ff"/>
<rect x="774" y="615" width="1" height="24" fill="#0000ff"/>
<rect x="790" y="620" width="1" height="19" fill="#0000ff"/>
<rect x="971" y="95" width="1" height="83" fill="#000"/>
<rect x="971" y="201" width="1" height="83" fill="#000"/>
<rect x="971" y="307" width="1" height="191" fill="#000"/>
<rect x="971" y="502" width="1" height="137" fill="#000"/>
<rect x="972" y="177" width="3" height="1" fill="#000"/>
<rect x="972" y="173" width="3" height="1" fill="#000"/>
<rect x="972" y="170" width="3" height="1" fill="#000"/>
<rect x="972" y="166" width="8" height="1" fill="#000"/>
<rect x="972" y="163" width="3" height="1" fill="#000"/>
<rect x="972" y="159" width="3" height="1" fill="#000"/>
<rect x="972" y="156" width="3" height="1" fill="#000"/>
<rect x="972" y="152" width="3" height="1" fill="#000"/>
<rect x="972" y="148" width="8" height="1" fill="#000"/>
<rect x="972" y="145" width="3" height="1" fill="#000"/>
<rect x="972" y="141" width="3" height="1" fill="#000"/>
<rect x="972" y="138" width="3" height="1" fill="#000"/>
<rect x="972" y="134" width="3" height="1" fill="#000"/>
<rect x="972" y="130" width="8" height="1" fill="#000"/>
<rect x="972" y="127" width="3" height="1" fill="#000"/>
<rect x="972" y="123" width="3" height="1" fill="#000"/>
<rect x="972" y="120" width="3" height="1" fill="#000"/>
<rect x="972" y="116" width="3" height="1" fill="#000"/>
<rect x="972" y="112" width="8" height="1" fill="#000"/>
<rect x="972" y="109" width="3" height="1" fill="#000"/>
<rect x="972" y="105" width="3" height="1" fill="#000"/>
<rect x="972" y="102" width="3" height="1" fill="#000"/>
<rect x="972" y="98" width="3" height="1" fill="#000"/>
<rect x="972" y="276" width="8" height="1" fill="#000"/>
<rect x="972" y="266" width="3" height="1" fill="#000"/>
<rect x="972" y="255" width="8" height="1" fill="#000"/>
<rect x="972" y="245" width="3" height="1" fill="#000"/>
<rect x="972" y="235" width="8" height="1" fill="#000"/>
<rect x="972" y="225" width="3" height="1" fill="#000"/>
<rect x="972" y="214" width="8" height="1" fill="#000"/>
<rect x="972" y="204" width="3" height="1" fill="#000"/>
<rect x="972" y="308" width="3" height="1" fill="#000"/>
<rect x="972" y="312" width="3" height="1" fill="#000"/>
<rect x="972" y="315" width="3" height="1" fill="#000"/>
<rect x="972" y="319" width="3" height="1" fill="#000"/>
<rect x="972" y="322" width="8" height="1" fill="#000"/>
<rect x="972" y="326" width="3" height="1" fill="#000"/>
<rect x="972" y="329" width="3" height="1" fill="#000"/>
<rect x="972" y="333" width="3" height="1" fill="#000"/>
<rect x="972" y="336" width="3" height="1" fill="#000"/>
<rect x="972" y="340" width="8" height="1" fill="#000"/>
<rect x="972" y="343" width="3" height="1" fill="#000"/>
<rect x="972" y="347" width="3" height="1" fill="#000"/>
<rect x="972" y="350" width="3" height="1" fill="#000"/>
<rect x="972" y="354" width="3" height="1" fill="#000"/>
<rect x="972" y="358" width="8" height="1" fill="#000"/>
<rect x="972" y="361" width="3" height="1" fill="#000"/>
<rect x="972" y="365" width="3" height="1" fill="#000"/>
<rect x="972" y="368" width="3" height="1" fill="#000"/>
<rect x="972" y="372" width="3" height="1" fill="#000"/>
<rect x="972" y="375" width="8" height="1" fill="#000"/>
<rect x="972" y="379" width="3" height="1" fill="#000"/>
<rect x="972" y="382" width="3" height="1" fill="#000"/>
<rect x="972" y="386" width="3" height="1" fill="#000"/>
<rect x="972" y="389" width="3" height="1" fill="#000"/>
<rect x="972" y="393" width="8" height="1" fill="#000"/>
<rect x="972" y="396" width="3" height="1" fill="#000"/>
<rect x="972" y="400" width="3" height="1" fill="#000"/>
<rect x="972" y="403" width="3" height="1" fill="#000"/>
<rect x="972" y="407" width="3" height="1" fill="#000"/>
<rect x="972" y="410" width="8" height="1" fill="#000"/>
<rect x="972" y="414" width="3" height="1" fill="#000"/>
<rect x="972" y="418" width="3" height="1" fill="#000"/>
<rect x="972" y="421" width="3" height="1" fill="#000"/>
<rect x="972" y="425" width="3" height="1" fill="#000"/>
<rect x="972" y="428" width="8" height="1" fill="#000"/>
<rect x="972" y="432" width="3" height="1" fill="#000"/>
<rect x="972" y="435" width="3" height="1" fill="#000"/>
<rect x="972" y="439" width="3" height="1" fill="#000"/>
<rect x="972" y="442" width="3" height="1" fill="#000"/>
<rect x="972" y="446" width="8" height="1" fill="#000"/>
<rect x="972" y="449" width="3" height="1" fill="#000"/>
<rect x="972" y="453" width="3" height="1" fill="#000"/>
<rect x="972" y="456" width="3" height="1" fill="#000"/>
<rect x="972" y="460" width="3" height="1" fill="#000"/>
<rect x="972" y="463" width="8" height="1" fill="#000"/>
<rect x="972" y="467" width="3" height="1" fill="#000"/>
<rect x="972" y="470" width="3" height="1" fill="#000"/>
<rect x="972" y="474" width="3" height="1" fill="#000"/>
<rect x="972" y="478" width="3" height="1" fill="#000"/>
<rect x="972" y="481" width="8" height="1" fill="#000"/>
<rect x="972" y="485" width="3" height="1" fill="#000"/>
<rect x="972" y="488" width="3" height="1" fill="#000"/>
<rect x="972" y="492" width="3" height="1" fill="#000"/>
<rect x="972" y="495" width="3" height="1" fill="#000"/>
<rect x="972" y="633" width="3" height="1" fill="#000"/>
<rect x="972" y="621" width="3" height="1" fill="#000"/>
<rect x="972" y="608" width="3" height="1" fill="#000"/>
<rect x="972" y="596" width="3" height="1" fill="#000"/>
<rect x="972" y="584" width="8" height="1" fill="#000"/>
<rect x="972" y="571" width="3" height="1" fill="#000"/>
<rect x="972" y="559" width="3" height="1" fill="#000"/>
<rect x="972" y="546" width="3" height="1" fill="#000"/>
<rect x="972" y="534" width="3" height="1" fill="#000"/>
<rect x="972" y="522" width="8" height="1" fill="#000"/>
<rect x="972" y="509" width="3" height="1" fill="#000"/>
<rect x="31" y="639" width="941" height="1" fill="#000"/>
<rect x="31" y="655" width="941" height="1" fill="#000"/>
<rect x="70" y="639" width="1" height="17" fill="#000"/>
<rect x="148" y="639" width="1" height="17" fill="#000"/>
<rect x="226" y="639" width="1" height="17" fill="#000"/>
<rect x="305" y="639" width="1" height="17" fill="#000"/>
<rect x="352" y="639" width="1" height="17" fill="#000"/>
<rect x="414" y="639" width="1" height="17" fill="#000"/>
<rect x="493" y="639" width="1" height="17" fill="#000"/>
<rect x="571" y="639" width="1" height="17" fill="#000"/>
<rect x="649" y="639" width="1" height="17" fill="#000"/>
<rect x="727" y="639" width="1" height="17" fill="#000"/>
<rect x="806" y="639" width="1" height="17" fill="#000"/>
<rect x="884" y="639" width="1" height="17" fill="#000"/>
<rect x="962" y="639" width="1" height="17" fill="#000"/>
<rect x="54" y="639" width="1" height="32" fill="#000"/>
<rect x="352" y="639" width="1" height="32" fill="#000"/>
<rect x="696" y="639" width="1" height="32" fill="#000"/>
<path d="M973.5 639V626.5h28V639" fill="#fff" stroke="#000" stroke-width="1"/>
</svg>

<!-- SCROLL ROW -->
<div class="a" style="left:30px;top:671px;width:994px;height:19px;background:linear-gradient(180deg,#f3f1e7 0,#fdfdf9 45%,#ebe8da 100%)"></div>
<div class="a" style="left:30px;top:674px;width:16px;height:15px;border-radius:2px;background:linear-gradient(180deg,#d7e2fb,#b8cbf6);border:1px solid #b5c8f3"></div>
<svg class="a" style="left:30px;top:674px" width="16" height="15"><path d="M10 4l-4 3.5 4 3.5" fill="none" stroke="#4d6185" stroke-width="2"/></svg>
<div class="a" style="left:743px;top:674px;width:90px;height:16px;border-radius:2px;background:linear-gradient(180deg,#c9d7fa,#b7caf5);border:1px solid #a9bff0"></div>
<svg class="a" style="left:781px;top:678px" width="14" height="9"><path d="M1.5 1v7M4.5 1v7M7.5 1v7M10.5 1v7" stroke="#eef3fd"/><path d="M2.5 1v7M5.5 1v7M8.5 1v7M11.5 1v7" stroke="#8ca4dc"/></svg>
<div class="a" style="left:834px;top:674px;width:16px;height:16px;border-radius:2px;background:linear-gradient(180deg,#d7e2fb,#b8cbf6);border:1px solid #b5c8f3"></div>
<svg class="a" style="left:834px;top:674px" width="16" height="16"><path d="M6 4l4 4-4 4" fill="none" stroke="#4d6185" stroke-width="2"/></svg>
<div class="a" style="left:852px;top:671px;width:172px;height:19px;background:#ECE9D8"></div>
<div class="sep" style="left:853px;top:673px;height:16px"></div>
<div class="sep" style="left:893px;top:673px;height:16px"></div>
<div class="sep" style="left:966px;top:673px;height:16px"></div>
<svg class="a" style="left:858px;top:671px" width="166" height="19">
<path d="M7 6q-3 3 0 7M11 6q3 3 0 7M5 7l2-1 1 2M13 12l-2 1-1-2" fill="none" stroke="#000" stroke-width="1.5"/>
<text x="19" y="14" font-family="Liberation Sans" font-weight="bold" font-size="11">D</text>
<path d="M47 4l-3 4h6zM47 15l-3-4h6z" fill="#000"/><path d="M47 7v5" stroke="#000" stroke-width="1.5"/>
<path d="M64.5 4v11M59 9.5h11" stroke="#000" stroke-width="1.5"/><path d="M64.5 3l-2 2h4zM64.5 16l-2-2h4zM58 9.5l2-2v4zM71 9.5l-2-2v4z" fill="#000"/>
<circle cx="81.5" cy="9.5" r="4.5" fill="none" stroke="#000" stroke-width="1.2"/><path d="M79 9.5h5" stroke="#000" stroke-width="1.5"/>
<circle cx="98.5" cy="9.5" r="4.5" fill="none" stroke="#000" stroke-width="1.2"/><path d="M96 9.5h5M98.5 7v5" stroke="#000" stroke-width="1.5"/>
<path d="M124 5v9l-5-4.5z" fill="#000"/><path d="M135 5v9l5-4.5z" fill="#000"/>
<rect x="150.5" y="5.5" width="8" height="9" fill="#fff" stroke="#000"/><path d="M151 7.5h7M152 10.5h5M152 12.5h5" stroke="#000"/>
</svg>

<!-- BOTTOM -->
<div class="a" style="left:0;top:690px;width:1024px;height:1px;background:#fff"></div>
<div class="a" style="left:0;top:689px;width:30px;height:1px;background:#c5c2b2"></div>
<div class="grip" style="left:3px;top:694px;height:22px"></div>
<div class="combo" style="left:13px;top:696px;width:131px;height:20px"></div><div class="dd" style="left:126px;top:698px;height:16px"></div>
<div class="a" style="left:29px;top:706px;width:82px;height:1px;background:#000"></div>
<div class="combo" style="left:149px;top:696px;width:101px;height:20px"></div><div class="dd" style="left:232px;top:698px;height:16px"></div>
<div class="a" style="left:161px;top:706px;width:60px;height:1px;background:#000"></div>
<div class="sep" style="left:254px;top:693px;height:24px"></div>
<div class="sep" style="left:959px;top:693px;height:24px"></div>
<div class="grip" style="left:259px;top:694px;height:22px"></div>
<div class="grip" style="left:375px;top:694px;height:22px"></div>
<div class="grip" style="left:566px;top:694px;height:22px"></div>
<div class="a" style="left:272px;top:697px;width:9px;height:9px;background:#000000;border:1px solid #a0a0a0"></div>
<div class="a" style="left:282px;top:697px;width:9px;height:9px;background:#0000ff;border:1px solid #a0a0a0"></div>
<div class="a" style="left:292px;top:697px;width:9px;height:9px;background:#00ffff;border:1px solid #a0a0a0"></div>
<div class="a" style="left:302px;top:697px;width:9px;height:9px;background:#00ff00;border:1px solid #a0a0a0"></div>
<div class="a" style="left:312px;top:697px;width:9px;height:9px;background:#ff00ff;border:1px solid #a0a0a0"></div>
<div class="a" style="left:322px;top:697px;width:9px;height:9px;background:#ff0000;border:1px solid #a0a0a0"></div>
<div class="a" style="left:332px;top:697px;width:9px;height:9px;background:#ffff00;border:1px solid #a0a0a0"></div>
<div class="a" style="left:342px;top:697px;width:9px;height:9px;background:#ffffff;border:1px solid #a0a0a0"></div>
<div class="a" style="left:272px;top:707px;width:9px;height:9px;background:#000080;border:1px solid #a0a0a0"></div>
<div class="a" style="left:282px;top:707px;width:9px;height:9px;background:#008080;border:1px solid #a0a0a0"></div>
<div class="a" style="left:292px;top:707px;width:9px;height:9px;background:#008000;border:1px solid #a0a0a0"></div>
<div class="a" style="left:302px;top:707px;width:9px;height:9px;background:#800080;border:1px solid #a0a0a0"></div>
<div class="a" style="left:312px;top:707px;width:9px;height:9px;background:#800000;border:1px solid #a0a0a0"></div>
<div class="a" style="left:322px;top:707px;width:9px;height:9px;background:#808000;border:1px solid #a0a0a0"></div>
<div class="a" style="left:332px;top:707px;width:9px;height:9px;background:#808080;border:1px solid #a0a0a0"></div>
<div class="a" style="left:342px;top:707px;width:9px;height:9px;background:#c0c0c0;border:1px solid #a0a0a0"></div>
<div class="a" style="left:321px;top:696px;width:11px;height:11px;border:1px dotted #000"></div>
<svg class="a" style="left:355px;top:692px" width="200" height="26">
<path d="M2 13h6l-3 3z" fill="#000"/>
<g><path d="M41.5 5.5h7l3 3v11h-10z" fill="#e8eef8" stroke="#7a8fb8"/><text x="37" y="17" font-family="Liberation Sans" font-weight="bold" font-size="14" fill="#2a6ad8">e</text><path d="M37 11q6-6 12-2" fill="none" stroke="#3a80e8" stroke-width="1.2"/></g>
<g><path d="M65.5 5.5h7l3 3v11h-10z" fill="#e8eef8" stroke="#7a8fb8"/><text x="61" y="17" font-family="Liberation Sans" font-weight="bold" font-size="14" fill="#2a6ad8">e</text><path d="M61 11q6-6 12-2" fill="none" stroke="#3a80e8" stroke-width="1.2"/></g>
<path d="M85.5 9.5h12v9h-12z" fill="#fff" stroke="#000"/><text x="89" y="14" font-size="9" font-family="Liberation Sans">1</text><path d="M87 17l9-5" stroke="#e00000"/>
<path d="M110.5 9.5h12v9h-12z" fill="#fff" stroke="#000"/><text x="114" y="14" font-size="9" font-family="Liberation Sans">2</text><path d="M112 17l9-5" stroke="#e00000"/>
<rect x="134.5" y="7.5" width="11" height="11" fill="#fff" stroke="#000"/><path d="M134 12.5h12" stroke="#000080" stroke-width="2"/>
<rect x="158.5" y="7.5" width="11" height="11" fill="#fff" stroke="#000"/><path d="M158 12.5h12" stroke="#000080" stroke-width="2"/>
<rect x="182.5" y="7.5" width="11" height="11" fill="#fff" stroke="#000"/><path d="M182 12.5h12" stroke="#000080" stroke-width="2"/>
</svg>
<div class="a" style="left:577px;top:696px;width:63px;height:19px;background:#ECE9D8;border:1px solid;border-color:#a0a0a0 #fff #fff #a0a0a0"></div>
<div class="combo" style="left:647px;top:696px;width:80px;height:20px"></div><div class="dd" style="left:709px;top:698px;height:16px"></div>
<div class="combo" style="left:733px;top:696px;width:150px;height:20px"></div><div class="dd" style="left:865px;top:698px;height:16px"></div>
<div class="a" style="left:890px;top:696px;width:62px;height:20px;border-radius:3px;background:#f5f4ea;border:1px solid #c9c7ba"></div>
<div class="a" style="left:0;top:718px;width:1024px;height:1px;background:#c5c2b2"></div>
<div class="a" style="left:0;top:719px;width:1024px;height:1px;background:#fff"></div>
<div class="sep" style="left:797px;top:722px;height:14px"></div>
<div class="sep" style="left:853px;top:722px;height:14px"></div>
<div class="sep" style="left:927px;top:722px;height:14px"></div>
<div class="sep" style="left:967px;top:722px;height:14px"></div>
<div class="sep" style="left:1017px;top:722px;height:14px"></div>

<!-- TASKBAR -->
<div id="task" class="a"></div>
<div class="a" style="left:0;top:738px;width:110px;height:30px;border-radius:0 10px 10px 0;background:linear-gradient(180deg,#3c9a3c 0,#4fb14f 10%,#3d9c3d 40%,#348c34 85%,#2b7a2b 100%);box-shadow:inset -2px 0 3px #1f5f1f"></div>
<svg class="a" style="left:9px;top:743px" width="22" height="20"><path d="M2 4q4-2 8 0v6q-4-2-8 0z" fill="#f04a1c"/><path d="M11 4q4-2 8 0v6q-4-2-8 0z" fill="#6cc33c"/><path d="M2 11q4-2 8 0v6q-4-2-8 0z" fill="#1d8fe8"/><path d="M11 11q4-2 8 0v6q-4-2-8 0z" fill="#ffc60a"/></svg>
<div class="tb" style="left:120px;width:158px"></div>
<div class="tb" style="left:280px;width:158px"></div>
<div class="tb tba" style="left:440px;width:159px"></div>
<div class="a" style="left:806px;top:738px;width:218px;height:30px;background:linear-gradient(180deg,#0c59b9 0,#139ee9 5%,#18b5f2 10%,#139beb 14%,#1290e8 19%,#0d8dea 63%,#0d9ff1 81%,#0f9eed 88%,#119be9 91%,#1392e2 94%,#137ed7 97%,#095bc9 100%);border-left:1px solid #1042af"></div>
<svg class="a" style="left:125px;top:745px" width="480" height="20">
<circle cx="10" cy="6" r="3" fill="#8cc8f0"/><path d="M5 15q0-6 5-6t5 6z" fill="#4aa0d8"/><circle cx="15" cy="8" r="3" fill="#a0e070"/><path d="M10 17q0-6 5-6t5 6z" fill="#3cb03c"/>
<path d="M168.5 2.5h9l3 3v13h-12z" fill="#fff" stroke="#6080a0"/><text x="164" y="15" font-family="Liberation Sans" font-weight="bold" font-size="15" fill="#1a60d0">e</text><path d="M163 8q7-7 15-3" fill="none" stroke="#f0a020" stroke-width="1.3"/>
<ellipse cx="332" cy="12" rx="7" ry="5" fill="#000"/><text x="324" y="9" font-family="Liberation Serif" font-weight="bold" font-size="10" fill="#e00000">MS</text><circle cx="329" cy="12" r="1" fill="#fff"/>
</svg>
<div class="a" style="left:779px;top:746px;width:13px;height:16px;background:#3b6fd6"></div>
<svg class="a" style="left:795px;top:742px" width="200" height="24">
<circle cx="10.7" cy="11.5" r="8.6" fill="#2a8cf0" stroke="#d8ecff" stroke-width="1.2"/><circle cx="10.7" cy="9" r="5" fill="#5ab0ff" opacity="0.6"/><path d="M12.5 7l-4 4.5 4 4.5" fill="none" stroke="#fff" stroke-width="2.4"/>
<path d="M23 14h11q-1 5-5.5 5t-5.5-5z" fill="#5050b0" stroke="#303080"/><path d="M34 15q3 0 2 2" fill="none" stroke="#303080"/><path d="M27 13q-2-4 2-7q1 3-1 7M30 13q2-3 0-6" stroke="#d04020" fill="none" stroke-width="1.4"/><ellipse cx="29" cy="19.5" rx="6" ry="1" fill="#303080"/>
<rect x="39" y="6" width="9" height="8" fill="#4060b0" stroke="#202060"/><rect x="45" y="3" width="9" height="8" fill="#5070c0" stroke="#202060"/><rect x="40" y="14" width="7" height="3" fill="#c0c0d0"/><path d="M47 12l7 7M54 12l-7 7" stroke="#ff2020" stroke-width="2.2"/>
<path d="M58 10l10-5 3 3-6 8-8 2z" fill="#f8e050" stroke="#b09020"/><path d="M57 13l5 6 8-6" fill="#e0e0e0" stroke="#909090"/>
<circle cx="83" cy="7" r="3.5" fill="#a0e080" stroke="#60a040"/><path d="M76 19q0-8 7-8t7 8z" fill="#70c050" stroke="#409030"/>
<rect x="94" y="3" width="14" height="11" fill="#a0a0a0" stroke="#202020"/><rect x="95" y="16" width="5" height="3" fill="#303030"/><rect x="103" y="16" width="5" height="3" fill="#303030"/>
<rect x="111" y="3" width="16" height="16" fill="#000"/><rect x="112" y="4" width="14" height="14" fill="#c8102e"/><path d="M114 16v-10l5 6 5-6v10" fill="none" stroke="#fff" stroke-width="2.2"/>
<rect x="129" y="3" width="16" height="16" fill="#108080"/><circle cx="137" cy="11" r="7" fill="#108080" stroke="#c0c0c0" stroke-width="1.3"/><path d="M137 12l4-4" stroke="#e0e0a0" stroke-width="1.3"/>
<rect x="147" y="3" width="7" height="7" rx="1" fill="#d0104a"/><rect x="155" y="3" width="7" height="7" rx="1" fill="#d0104a"/><rect x="147" y="11" width="7" height="7" rx="1" fill="#d0104a"/><rect x="155" y="11" width="7" height="7" rx="1" fill="#9020a0"/>
<circle cx="173" cy="11" r="8" fill="#20a030"/><circle cx="173" cy="11" r="6.5" fill="#30b840"/><text x="168" y="16" font-family="Liberation Sans" font-weight="bold" font-size="13" fill="#fff">e</text>
</svg>
<div class="t" style="left:1004.70px;top:107.64px;font-size:12px;color:#000;letter-spacing:-0.280px;">95</div>
<div class="t" style="left:1004.70px;top:125.54px;font-size:12px;color:#000;letter-spacing:-0.280px;">90</div>
<div class="t" style="left:1004.70px;top:143.64px;font-size:12px;color:#000;letter-spacing:-0.280px;">85</div>
<div class="t" style="left:1004.70px;top:161.44px;font-size:12px;color:#000;letter-spacing:-0.280px;">80</div>
<div class="t" style="left:1004.70px;top:209.54px;font-size:12px;color:#000;letter-spacing:-0.280px;">90</div>
<div class="t" style="left:1004.70px;top:230.34px;font-size:12px;color:#000;letter-spacing:-0.280px;">80</div>
<div class="t" style="left:1004.70px;top:250.44px;font-size:12px;color:#000;letter-spacing:-0.280px;">70</div>
<div class="t" style="left:1004.70px;top:270.74px;font-size:12px;color:#000;letter-spacing:-0.280px;">60</div>
<div class="t" style="left:995.30px;top:317.34px;font-size:12px;color:#000;letter-spacing:-0.290px;">2.70</div>
<div class="t" style="left:995.30px;top:334.99px;font-size:12px;color:#000;letter-spacing:-0.290px;">2.65</div>
<div class="t" style="left:995.30px;top:352.64px;font-size:12px;color:#000;letter-spacing:-0.290px;">2.60</div>
<div class="t" style="left:995.30px;top:370.29px;font-size:12px;color:#000;letter-spacing:-0.290px;">2.55</div>
<div class="t" style="left:995.30px;top:387.94px;font-size:12px;color:#000;letter-spacing:-0.290px;">2.50</div>
<div class="t" style="left:995.30px;top:405.59px;font-size:12px;color:#000;letter-spacing:-0.290px;">2.45</div>
<div class="t" style="left:995.30px;top:423.24px;font-size:12px;color:#000;letter-spacing:-0.290px;">2.40</div>
<div class="t" style="left:995.30px;top:440.89px;font-size:12px;color:#000;letter-spacing:-0.290px;">2.35</div>
<div class="t" style="left:995.30px;top:458.54px;font-size:12px;color:#000;letter-spacing:-0.290px;">2.30</div>
<div class="t" style="left:995.30px;top:476.19px;font-size:12px;color:#000;letter-spacing:-0.290px;">2.25</div>
<div class="t" style="left:984.30px;top:516.64px;font-size:12px;color:#000;letter-spacing:-0.035px;">10000</div>
<div class="t" style="left:991.10px;top:578.64px;font-size:12px;color:#000;letter-spacing:-0.076px;">5000</div>
<div class="t" style="left:975.00px;top:628.53px;font-size:10px;color:#000;letter-spacing:-0.450px;">x1000</div>
<div class="t" style="left:72.00px;top:642.69px;font-size:11px;color:#000;">4</div>
<div class="t" style="left:150.00px;top:642.69px;font-size:11px;color:#000;">11</div>
<div class="t" style="left:228.00px;top:642.69px;font-size:11px;color:#000;">18</div>
<div class="t" style="left:307.00px;top:642.69px;font-size:11px;color:#000;">27</div>
<div class="t" style="left:354.00px;top:642.69px;font-size:11px;color:#000;">2</div>
<div class="t" style="left:416.00px;top:642.69px;font-size:11px;color:#000;">8</div>
<div class="t" style="left:494.00px;top:642.69px;font-size:11px;color:#000;">15</div>
<div class="t" style="left:573.00px;top:642.69px;font-size:11px;color:#000;">22</div>
<div class="t" style="left:651.00px;top:642.69px;font-size:11px;color:#000;">29</div>
<div class="t" style="left:729.00px;top:642.69px;font-size:11px;color:#000;">5</div>
<div class="t" style="left:808.00px;top:642.69px;font-size:11px;color:#000;">12</div>
<div class="t" style="left:886.00px;top:642.69px;font-size:11px;color:#000;">19</div>
<div class="t" style="left:964.00px;top:642.69px;font-size:11px;color:#000;">2</div>
<div class="t" style="left:56.50px;top:658.27px;font-size:11.5px;color:#000;letter-spacing:0.592px;">December</div>
<div class="t" style="left:354.00px;top:658.27px;font-size:11.5px;color:#000;letter-spacing:0.352px;">2007</div>
<div class="t" style="left:698.40px;top:658.27px;font-size:11.5px;color:#000;letter-spacing:0.246px;">February</div>
<div class="t" style="left:328.60px;top:54.79px;font-size:12.3px;color:#000;transform:scaleX(0.8553);transform-origin:0 0;">Chaikin Money Flow</div>
<div class="t" style="left:22.60px;top:6.12px;font-size:13.8px;color:#fff;font-weight:bold;transform:scaleX(0.9159);transform-origin:0 0;text-shadow:1px 1px 0 #0a1c7a;">MetaStock Professional - [Chart1 - 1 PORTUCEL]</div>
<div class="t" style="left:590.60px;top:6.12px;font-size:13.8px;color:#fff;font-weight:bold;letter-spacing:0.246px;text-shadow:1px 1px 0 #0a1c7a;">2.67000</div>
<div class="t" style="left:915.50px;top:6.12px;font-size:13.8px;color:#fff;font-weight:bold;transform:scaleX(0.9247);transform-origin:0 0;text-shadow:1px 1px 0 #0a1c7a;">Daily</div>
<div class="t" style="left:26.00px;top:30.07px;font-size:11.5px;color:#000;letter-spacing:-0.883px;">File</div>
<div class="a" style="left:26px;top:40px;width:5px;height:1px;background:#000"></div>
<div class="t" style="left:54.00px;top:30.07px;font-size:11.5px;color:#000;letter-spacing:-0.707px;">Edit</div>
<div class="a" style="left:54px;top:40px;width:6px;height:1px;background:#000"></div>
<div class="t" style="left:84.00px;top:30.07px;font-size:11.5px;color:#000;letter-spacing:-0.930px;">View</div>
<div class="a" style="left:84px;top:40px;width:7px;height:1px;background:#000"></div>
<div class="t" style="left:118.00px;top:30.07px;font-size:11.5px;color:#000;letter-spacing:-0.128px;">Insert</div>
<div class="a" style="left:119px;top:40px;width:3px;height:1px;background:#000"></div>
<div class="t" style="left:158.00px;top:30.07px;font-size:11.5px;color:#000;letter-spacing:-0.404px;">Format</div>
<div class="a" style="left:165px;top:40px;width:6px;height:1px;background:#000"></div>
<div class="t" style="left:205.00px;top:30.07px;font-size:11.5px;color:#000;letter-spacing:-0.572px;">Tools</div>
<div class="a" style="left:205px;top:40px;width:6px;height:1px;background:#000"></div>
<div class="t" style="left:242.00px;top:30.07px;font-size:11.5px;color:#000;letter-spacing:-0.651px;">Window</div>
<div class="a" style="left:242px;top:40px;width:9px;height:1px;background:#000"></div>
<div class="t" style="left:291.00px;top:30.07px;font-size:11.5px;color:#000;letter-spacing:-0.664px;">Help</div>
<div class="a" style="left:291px;top:40px;width:7px;height:1px;background:#000"></div>
<svg class="a" style="left:2px;top:3px" width="18" height="18"><ellipse cx="9" cy="11" rx="6" ry="4.5" fill="#000"/><path d="M3 15l-1 3M6 15l0 3M12 15l1 3M15 14l2 3" stroke="#000" stroke-width="1.2"/><circle cx="7" cy="10" r="1" fill="#fff"/><circle cx="11" cy="12" r="1" fill="#888"/><text x="1" y="9" font-family="Liberation Serif" font-weight="bold" font-size="10" fill="#e00000">MS</text></svg>
<div class="t" style="left:51.00px;top:78.69px;font-size:11px;color:#e8eefa;font-weight:bold;letter-spacing:0.193px;">Stochastic Oscillator</div>
<div class="t" style="left:169.00px;top:78.69px;font-size:11px;color:#ff0000;font-weight:bold;letter-spacing:0.767px;">(89.0625)</div>
<div class="t" style="left:51.00px;top:184.69px;font-size:11px;color:#e8eefa;font-weight:bold;letter-spacing:0.554px;">Relative Strength Index</div>
<div class="t" style="left:190.00px;top:184.69px;font-size:11px;color:#ff0000;font-weight:bold;letter-spacing:0.767px;">(69.6423)</div>
<div class="t" style="left:51.50px;top:290.69px;font-size:11px;color:#e8eefa;font-weight:bold;letter-spacing:-0.619px;">1 PORTUCEL</div>
<div class="t" style="left:120.60px;top:290.69px;font-size:11px;color:#000;font-weight:bold;letter-spacing:0.674px;">(2.65000, 2.67000, 2.64000, 2.67000, +0.02000)</div>
<div class="t" style="left:389.00px;top:290.69px;font-size:11px;color:#e8eefa;font-weight:bold;letter-spacing:0.333px;">, Chaikin Money Flow (0.14260)</div>
<div class="t" style="left:580.00px;top:700.69px;font-size:11px;color:#000;letter-spacing:-0.244px;">21024802</div>
<div class="t" style="left:736.00px;top:701.27px;font-size:11.5px;color:#000;letter-spacing:-0.344px;">&lt;No Vendor&gt;</div>
<div class="t" style="left:906.00px;top:701.27px;font-size:11.5px;color:#aca899;letter-spacing:0.075px;">Trade</div>
<div class="t" style="left:2.00px;top:724.27px;font-size:11.5px;color:#000;letter-spacing:-0.513px;">For Help, press F1</div>
<div class="t" style="left:734.00px;top:724.27px;font-size:11.5px;color:#000;letter-spacing:-0.083px;">08-01-2007</div>
<div class="t" style="left:860.00px;top:724.27px;font-size:11.5px;color:#000;letter-spacing:-0.025px;">11,557,982.0</div>
<div class="t" style="left:932.00px;top:724.27px;font-size:11.5px;color:#000;letter-spacing:0.244px;">12:55</div>
<div class="t" style="left:978.00px;top:724.00px;font-size:13px;color:#008000;font-weight:bold;">$</div>
<div class="t" style="left:35.00px;top:743.76px;font-size:18px;color:#fff;font-weight:bold;font-style:italic;letter-spacing:-0.290px;text-shadow:1px 1px 1px #1a4a1a;">Iniciar</div>
<div class="t" style="left:148.00px;top:749.07px;font-size:11.5px;color:#fff;letter-spacing:-0.455px;">Windows Live Messen...</div>
<div class="t" style="left:308.00px;top:749.07px;font-size:11.5px;color:#fff;letter-spacing:-0.755px;">CALDEIRÃO DE BOLS...</div>
<div class="t" style="left:469.00px;top:749.07px;font-size:11.5px;color:#fff;letter-spacing:-0.281px;">MetaStock Profession...</div>
<div class="t" style="left:780.00px;top:748.69px;font-size:11px;color:#fff;letter-spacing:-1.031px;">PT</div>
<div class="t" style="left:983.50px;top:747.27px;font-size:11.5px;color:#fff;letter-spacing:-0.456px;">12:55</div>
</body></html>
